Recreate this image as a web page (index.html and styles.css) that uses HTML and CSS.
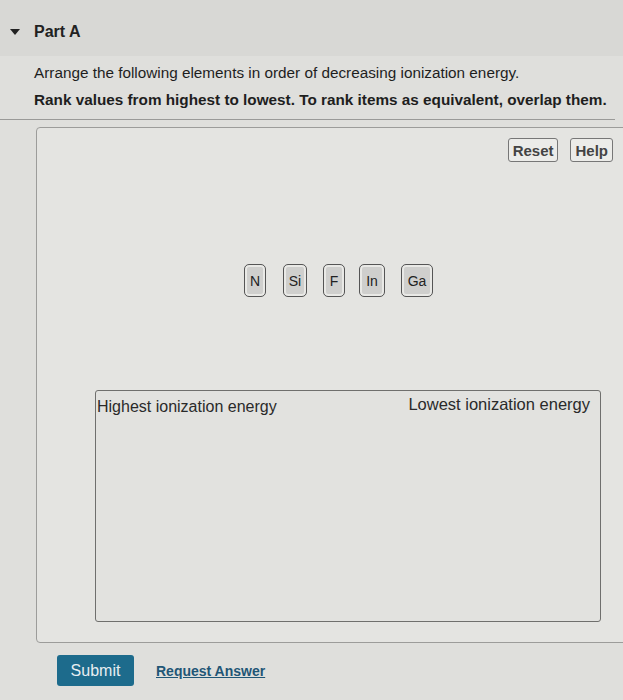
FILE: index.html
```html
<!DOCTYPE html>
<html>
<head>
<meta charset="utf-8">
<link rel="stylesheet" href="styles.css">
</head>
<body>
<div class="page">
  <header class="part-header">
    <span class="caret"></span>
    <h2 class="part-title">Part A</h2>
  </header>
  <section class="question">
    <p class="prompt">Arrange the following elements in order of decreasing ionization energy.</p>
    <p class="instr">Rank values from highest to lowest. To rank items as equivalent, overlap them.</p>
  </section>
  <section class="panel">
    <div class="tools">
      <button class="tool-btn">Reset</button>
      <button class="tool-btn">Help</button>
    </div>
    <div class="tiles">
      <span class="tile t-n">N</span>
      <span class="tile t-si">Si</span>
      <span class="tile t-f">F</span>
      <span class="tile t-in">In</span>
      <span class="tile t-ga">Ga</span>
    </div>
    <div class="rank-box">
      <span class="rank-label">Highest ionization energy</span>
      <span class="rank-label high">Lowest ionization energy</span>
    </div>
  </section>
  <footer class="actions">
    <button class="submit">Submit</button>
    <a class="request" href="#">Request Answer</a>
  </footer>
</div>
</body>
</html>
```

FILE: styles.css
```css
html, body {
  margin: 0;
  padding: 0;
}
body {
  width: 623px;
  height: 700px;
  overflow: hidden;
  background: #dfdfdc;
  font-family: "Liberation Sans", Arial, sans-serif;
  color: #1e1e1e;
}
.page {
  display: flex;
  flex-direction: column;
}
.part-header {
  display: flex;
  align-items: center;
  height: 56px;
  padding-left: 10px;
  padding-top: 7px;
  box-sizing: border-box;
  background: #d8d8d5;
}
.caret {
  width: 0;
  height: 0;
  border-left: 5px solid transparent;
  border-right: 5px solid transparent;
  border-top: 6px solid #222;
  margin-right: 14px;
}
.part-title {
  margin: 0;
  font-size: 16px;
  font-weight: bold;
  color: #222;
}
.question {
  padding: 8px 0 0 34px;
  margin-right: 8px;
  border-bottom: 1px solid #9a9a98;
  padding-bottom: 10px;
}
.prompt {
  margin: 0 0 9px;
  font-size: 15.3px;
  line-height: 18px;
}
.instr {
  margin: 0;
  font-size: 15.3px;
  font-weight: bold;
  line-height: 18px;
}
.panel {
  margin: 7px -20px 0 36px;
  height: 516px;
  border: 1px solid #9c9c9a;
  border-radius: 4px;
  background: #e4e4e1;
  box-sizing: border-box;
  display: flex;
  flex-direction: column;
  position: relative;
}
.tools {
  display: flex;
  justify-content: flex-end;
  gap: 12px;
  padding: 10px 29px 0 0;
}
.tool-btn {
  font-family: "Liberation Sans", Arial, sans-serif;
  font-size: 15px;
  font-weight: bold;
  color: #444;
  background: #ecece9;
  border: 1px solid #777;
  border-radius: 3px;
  height: 24px;
  padding: 0 4px;
}
.tiles {
  display: flex;
  align-items: center;
  margin: 102px 0 0 207px;
  height: 33px;
}
.tile {
  display: flex;
  align-items: center;
  justify-content: center;
  height: 31px;
  border: 1px solid #555;
  border-radius: 5px;
  background: #cfcfcd;
  box-shadow: inset 0 0 0 2px #e9e9e6;
  font-size: 14px;
  color: #222;
  box-sizing: content-box;
}
.t-n { width: 20px; }
.t-si { width: 22px; margin-left: 17px; }
.t-f { width: 20px; margin-left: 16px; }
.t-in { width: 24px; margin-left: 14px; }
.t-ga { width: 30px; margin-left: 16px; }
.rank-box {
  margin: 93px 0 0 58px;
  width: 506px;
  height: 232px;
  border: 1px solid #6f6f6d;
  border-radius: 3px;
  box-sizing: border-box;
  background: #e2e2df;
  display: flex;
  justify-content: space-between;
  padding: 7px 10px 0 1px;
}
.rank-label {
  font-size: 16px;
  color: #2a2a2a;
  line-height: 18px;
}
.rank-label.high {
  margin-top: -3px;
  font-size: 16.5px;
}
.actions {
  display: flex;
  align-items: center;
  padding: 12px 0 0 57px;
  gap: 22px;
}
.submit {
  width: 77px;
  height: 31px;
  border: none;
  border-radius: 3px;
  background: #1d6b8c;
  color: #e8eef2;
  font-family: "Liberation Sans", Arial, sans-serif;
  font-size: 16px;
}
.request {
  font-size: 14px;
  font-weight: bold;
  color: #1f5676;
  text-decoration: underline;
}
```
